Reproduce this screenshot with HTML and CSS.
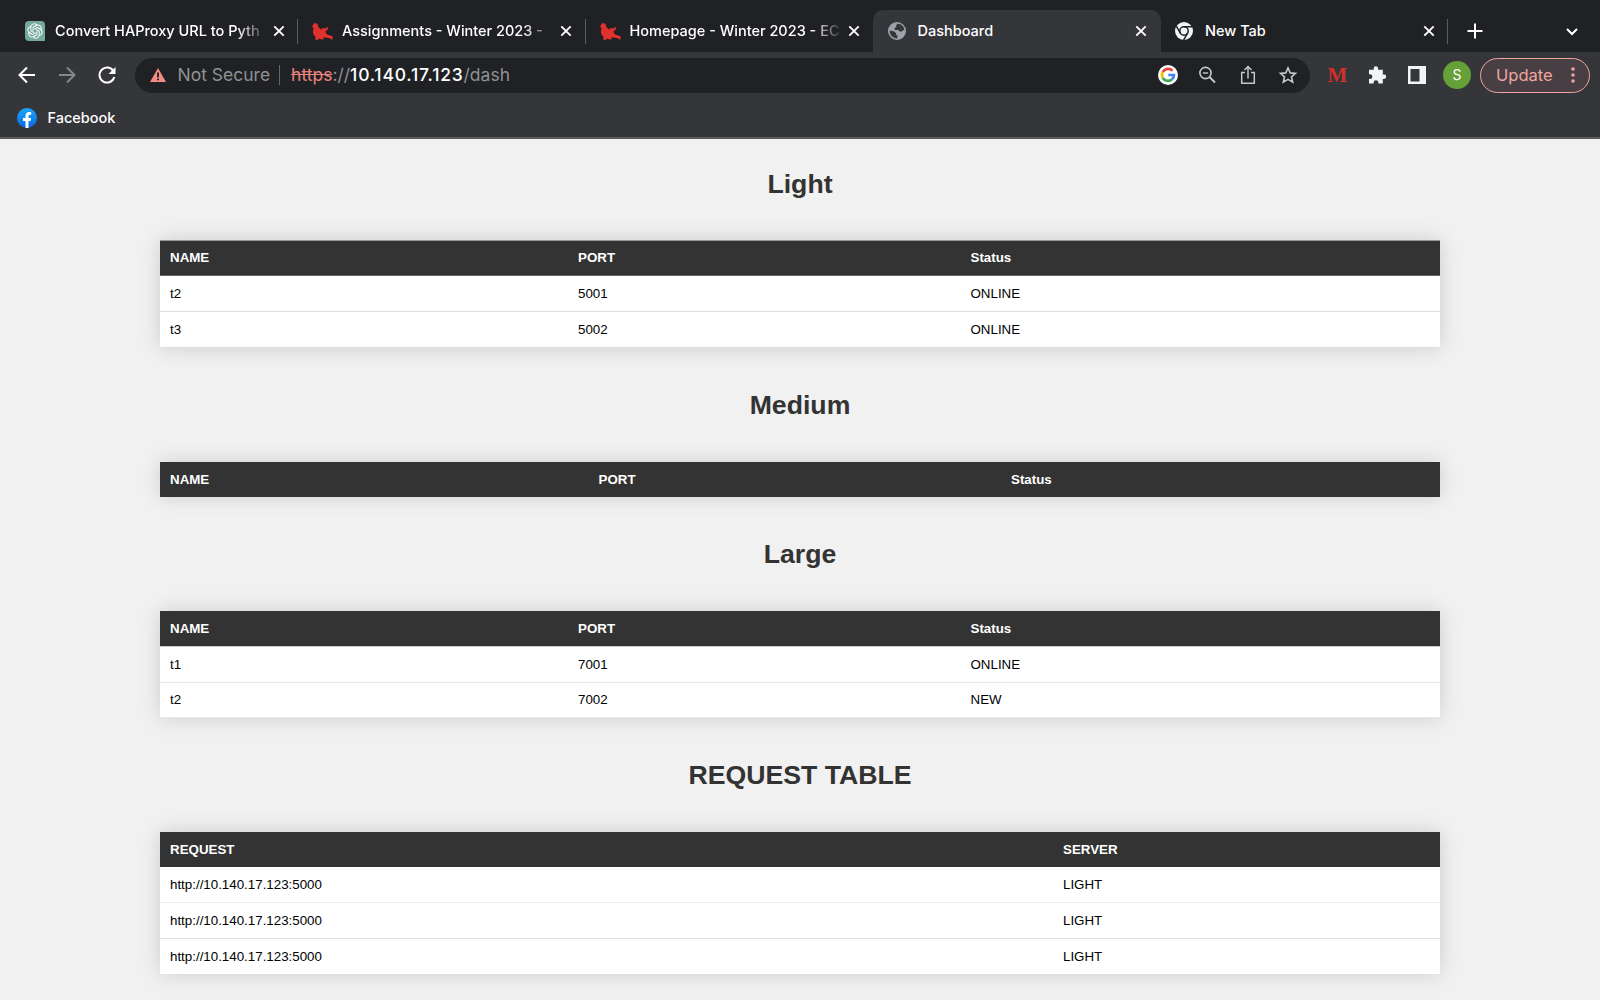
FILE: index.html
```html
<!DOCTYPE html>
<html lang="en">
<head>
<meta charset="utf-8">
<title>Dashboard</title>
<link rel="stylesheet" href="styles.css">
</head>
<body>
<svg class="defs" width="0" height="0">
  <symbol id="x" viewBox="0 0 12 12"><path d="M1.300 1.300l9.400 9.400M10.700 1.300l-9.400 9.400" stroke="#fff" stroke-width="1.900" fill="none"/></symbol>
  <symbol id="bird" viewBox="0 0 21 18"><path d="M.3 3.500L1 1.800C1.800-.3 5.600-.2 6 2.300L6.400 4.200 9 6.500 11 4.800 12.300 5.800 16.200 3.800 15.600 6.800 13.300 8.500 14.500 11 17 12.300 20.600 13.300 20.300 17.300 18.500 15.500 15 14.800 11.500 14.200 11.800 16.500 8.500 16.300 7.200 15.500 5.500 17 3.200 16.500 3.500 14 1.500 11.500 .8 8.500 1.500 5.500z" fill="#e0312d"/></symbol>
</svg>
<header class="browser">
  <div class="tabs">
    <div class="tab divided">
      <svg class="fav" width="20" height="20" viewBox="0 0 20 20"><path d="M4 0h12a4 4 0 0 1 4 4v16H4a4 4 0 0 1-4-4V4a4 4 0 0 1 4-4z" fill="#75a99b"/><path transform="translate(2.300 2.300) scale(.64)" fill="#fff" d="M22.2819 9.8211a5.9847 5.9847 0 0 0-.5157-4.9108 6.0462 6.0462 0 0 0-6.5098-2.9A6.0651 6.0651 0 0 0 4.9807 4.1818a5.9847 5.9847 0 0 0-3.9977 2.9 6.0462 6.0462 0 0 0 .7427 7.0966 5.98 5.98 0 0 0 .511 4.9107 6.051 6.051 0 0 0 6.5146 2.9001A5.9847 5.9847 0 0 0 13.2599 24a6.0557 6.0557 0 0 0 5.7718-4.2058 5.9894 5.9894 0 0 0 3.9977-2.9001 6.0557 6.0557 0 0 0-.7475-7.0729zm-9.022 12.6081a4.4755 4.4755 0 0 1-2.8764-1.0408l.1419-.0804 4.7783-2.7582a.7948.7948 0 0 0 .3927-.6813v-6.7369l2.02 1.1686a.071.071 0 0 1 .038.052v5.5826a4.504 4.504 0 0 1-4.4945 4.4944zm-9.6607-4.1254a4.4708 4.4708 0 0 1-.5346-3.0137l.142.0852 4.783 2.7582a.7712.7712 0 0 0 .7806 0l5.8428-3.3685v2.3324a.0804.0804 0 0 1-.0332.0615L9.74 19.9502a4.4992 4.4992 0 0 1-6.1408-1.6464zM2.3408 7.8956a4.485 4.485 0 0 1 2.3655-1.9728V11.6a.7664.7664 0 0 0 .3879.6765l5.8144 3.3543-2.0201 1.1685a.0757.0757 0 0 1-.071 0l-4.8303-2.7865A4.504 4.504 0 0 1 2.3408 7.872zm16.5963 3.8558L13.1038 8.364 15.1192 7.2a.0757.0757 0 0 1 .071 0l4.8303 2.7913a4.4944 4.4944 0 0 1-.6765 8.1042v-5.6772a.79.79 0 0 0-.407-.667zm2.0107-3.0231l-.142-.0852-4.7735-2.7818a.7759.7759 0 0 0-.7854 0L9.409 9.2297V6.8974a.0662.0662 0 0 1 .0284-.0615l4.8303-2.7866a4.4992 4.4992 0 0 1 6.6802 4.66zM8.3065 12.863l-2.02-1.1638a.0804.0804 0 0 1-.038-.0567V6.0742a4.4992 4.4992 0 0 1 7.3757-3.4537l-.142.0805L8.704 5.459a.7948.7948 0 0 0-.3927.6813zm1.0976-2.3654l2.602-1.4998 2.6069 1.4998v2.9994l-2.5974 1.4997-2.6067-1.4997Z"/></svg>
      <span class="title fade">Convert HAProxy URL to Pyth</span><svg class="close" width="12" height="12"><use href="#x"/></svg>
    </div>
    <div class="tab divided"><svg class="fav bird" width="21" height="18"><use href="#bird"/></svg><span class="title fade">Assignments - Winter 2023 -</span><svg class="close" width="12" height="12"><use href="#x"/></svg></div>
    <div class="tab"><svg class="fav bird" width="21" height="18"><use href="#bird"/></svg><span class="title fade">Homepage - Winter 2023 - EC</span><svg class="close" width="12" height="12"><use href="#x"/></svg></div>
    <div class="tab active">
      <svg class="fav" width="18" height="18" viewBox="0 0 18 18"><circle cx="9" cy="9" r="9" fill="#9da2a8"/><path d="M9.500 1.700L8 3.500l.4 1.600-1.800 1v1.800h3.600l1.500 1.500h2.200l1.300-1.500 1 .6C16.500 4.500 13.500 1.500 9.500 1.700zM1.800 8.500l4.600 1.100 1.700 1.700v1.500l1.400.8-.2 2.800C4.500 16 1.500 13 1.800 8.500z" fill="#35363a"/></svg>
      <span class="title wide">Dashboard</span><svg class="close" width="12" height="12"><use href="#x"/></svg>
    </div>
    <div class="tab divided">
      <svg class="fav" width="18" height="18" viewBox="0 0 18 18"><circle cx="9" cy="9" r="9" fill="#f1f3f4"/><circle cx="9" cy="9" r="4.200" fill="none" stroke="#202124" stroke-width="1.500"/><path d="M9 4.800h8M5.400 11.100L1.300 4.200M12.600 11.100l-4 7" stroke="#202124" stroke-width="1.500"/></svg>
      <span class="title wide">New Tab</span><svg class="close" width="12" height="12"><use href="#x"/></svg>
    </div>
    <svg class="plus" width="16" height="16" viewBox="0 0 16 16"><path d="M8 .5v15M.5 8h15" stroke="#fff" stroke-width="2"/></svg>
    <svg class="chev" width="12" height="8" viewBox="0 0 12 8"><path d="M1 1l5 5 5-5" fill="none" stroke="#fff" stroke-width="2"/></svg>
  </div>
  <div class="toolbar">
    <svg class="nav" width="18" height="18" viewBox="0 0 18 18"><path d="M17 9H2M9 1.500L1.500 9 9 16.500" fill="none" stroke="#fff" stroke-width="2"/></svg>
    <svg class="nav" width="18" height="18" viewBox="0 0 18 18"><path d="M1 9h15M9 1.500L16.500 9 9 16.500" fill="none" stroke="#85878a" stroke-width="2"/></svg>
    <svg class="nav" width="18" height="18" viewBox="0 0 18 18"><path d="M15.500 5.200A7.500 7.500 0 1 0 16.300 11" fill="none" stroke="#fff" stroke-width="2"/><path d="M17.500 1v7h-7z" fill="#fff"/></svg>
    <div class="omnibox">
      <svg class="warn" width="16" height="14" viewBox="0 0 16 14"><path d="M8 0l8 14H0z" fill="#f28b82"/><path d="M8 4.500v4.800M8 10.400v1.800" stroke="#202124" stroke-width="1.900"/></svg>
      <span class="insecure">Not Secure</span><i class="sep"></i>
      <span class="url"><s>https</s>://<b>10.140.17.123</b>/dash</span>
      <svg width="20" height="20" viewBox="0 0 20 20"><circle cx="10" cy="10" r="10" fill="#fff"/><g fill="none" stroke-width="2.700"><path d="M14.500 5.700A6.100 6.100 0 0 0 4.800 7" stroke="#ea4335"/><path d="M4.800 7a6.100 6.100 0 0 0 0 6" stroke="#fbbc05"/><path d="M4.800 13a6.100 6.100 0 0 0 9 1.500" stroke="#34a853"/><path d="M13.800 14.500A6 6 0 0 0 16 10h-5.700" stroke="#4285f4"/></g></svg>
      <svg width="20" height="18" viewBox="0 0 18 18" fill="none" stroke="#c4c7c9"><circle cx="6.500" cy="7" r="5.600" stroke-width="1.600"/><path d="M10.500 11l5.500 5.500" stroke-width="2"/><path d="M3.800 7h5.400" stroke-width="1.400"/></svg>
      <svg width="20" height="20" viewBox="0 0 16 20" fill="none" stroke="#c4c7c9" stroke-width="1.500"><path d="M5 7.500H1.700v10.700h12.600V7.500H11M8 13.500V2M4.500 5L8 1.500 11.500 5"/></svg>
      <svg width="20" height="18" viewBox="0 0 18 18"><path d="M9 1.900l2.200 5 5.300.5-4 3.500 1.200 5.300L9 13.400l-4.700 2.800 1.200-5.300-4-3.500 5.300-.5z" fill="none" stroke="#c4c7c9" stroke-width="1.600"/></svg>
    </div>
    <span class="mext">M</span>
    <svg class="puzzle" width="18" height="18" viewBox="0 0 18 18"><path d="M1 3.800h4.700V2.500a2.200 2.200 0 0 1 4.400 0v1.300h4.700v4.700H16a2.200 2.200 0 0 1 0 4.400h-1.200v4.700h-4.400v-1a2.400 2.400 0 0 0-4.800 0v1H1v-4.500h1a2.400 2.400 0 0 0 0-4.800H1z" fill="#f1f3f4"/></svg>
    <svg class="panel" width="18" height="18" viewBox="0 0 18 18"><path d="M0 0h18v18H0zM2.500 3v12.500h9V3z" fill="#f1f3f4" fill-rule="evenodd"/></svg>
    <span class="avatar">S</span>
    <div class="update">Update<svg width="4" height="16" viewBox="0 0 4 16" fill="#f0a59f"><circle cx="2" cy="2" r="1.800"/><circle cx="2" cy="8" r="1.800"/><circle cx="2" cy="14" r="1.800"/></svg></div>
  </div>
  <div class="bookmarks">
    <svg width="20" height="20" viewBox="0 0 20 20"><defs><linearGradient id="fb" x2="0" y2="1"><stop stop-color="#1aa9fb"/><stop offset="1" stop-color="#0866e0"/></linearGradient></defs><circle cx="10" cy="10" r="10" fill="url(#fb)"/><path d="M8.500 20v-7H6v-3h2.500V8c0-2.700 1.500-4 3.800-4l1.900.2v2.500h-1.200c-1.200 0-1.500.7-1.500 1.500V10h2.600l-.5 3h-2.100v7z" fill="#fff"/></svg>
    <span>Facebook</span>
  </div>
</header>
<main>
  <h2>Light</h2>
  <table class="light">
    <colgroup><col class="c-name"><col class="c-port"><col></colgroup>
    <thead><tr><th>NAME</th><th>PORT</th><th>Status</th></tr></thead>
    <tbody><tr><td>t2</td><td>5001</td><td>ONLINE</td></tr><tr><td>t3</td><td>5002</td><td>ONLINE</td></tr></tbody>
  </table>
  <h2>Medium</h2>
  <table>
    <colgroup><col class="e-name"><col class="e-port"><col></colgroup>
    <thead><tr><th>NAME</th><th>PORT</th><th>Status</th></tr></thead>
  </table>
  <h2>Large</h2>
  <table class="large">
    <colgroup><col class="c-name"><col class="c-port"><col></colgroup>
    <thead><tr><th>NAME</th><th>PORT</th><th>Status</th></tr></thead>
    <tbody><tr><td>t1</td><td>7001</td><td>ONLINE</td></tr><tr><td>t2</td><td>7002</td><td>NEW</td></tr></tbody>
  </table>
  <h2>REQUEST TABLE</h2>
  <table class="requests">
    <colgroup><col class="r-req"><col></colgroup>
    <thead><tr><th>REQUEST</th><th>SERVER</th></tr></thead>
    <tbody><tr><td>http://10.140.17.123:5000</td><td>LIGHT</td></tr><tr><td>http://10.140.17.123:5000</td><td>LIGHT</td></tr><tr><td>http://10.140.17.123:5000</td><td>LIGHT</td></tr></tbody>
  </table>
</main>
</body>
</html>
```

FILE: styles.css
```css
* { box-sizing: border-box; }
body { margin: 0; height: 1000px; overflow: hidden; background: #f1f1f1; font-family: "Liberation Sans", Arial, sans-serif; }
.defs { position: absolute; }
svg { flex: none; display: block; }

.browser { height: 139px; background: #35363a; border-bottom: 2px solid #5b5c5f; font-family: Inter, sans-serif; color: #fff; }
.tabs { height: 52px; background: #202124; display: flex; padding: 10px 22px 0 10.500px; }
.tab { height: 42px; display: flex; align-items: center; padding: 0 13.500px 0 14.500px; flex: none; width: 287.500px; font-size: 14.500px; font-weight: 500; }
.tab .title { flex: 1; min-width: 0; margin-left: 10px; white-space: nowrap; line-height: 24px; }
.tab .wide { margin-left: 12px; }
.tab .bird + .title { margin-left: 9px; }
.fade { -webkit-mask-image: linear-gradient(90deg, #000 86%, transparent 101%); mask-image: linear-gradient(90deg, #000 86%, transparent 101%); }
.tab .close { margin-left: 7px; }
.divided { background: linear-gradient(#5c5d60, #5c5d60) right center / 1px 25px no-repeat; }
.bird { margin-top: 2px; margin-left: -.5px; }
.active { background: #35363a; border-radius: 10px 10px 0 0; }
.plus { margin: 13px 0 0 19px; }
.chev { margin: 18px 0 0 auto; }

.toolbar { height: 46px; display: flex; align-items: center; padding: 0 10px 0 18.200px; }
.nav { margin-right: 22px; }
.omnibox { width: 1175px; height: 35px; margin-left: -3.200px; border-radius: 18px; background: #202124; display: flex; align-items: center; padding: 0 12.500px 0 15px; font-size: 17.500px; line-height: 22px; color: #8f9194; gap: 20px; }
.insecure { margin-left: -8.500px; }
.sep { width: 1px; height: 20px; background: #66676a; margin-left: -11.500px; }
.url { flex: 1; margin-left: -8.500px; }
.url b { font-weight: 450; letter-spacing: .8px; color: #fff; }
.url s { color: #e9847c; }
.mext { margin-left: 17.500px; width: 20px; font: bold 21px "Liberation Serif", serif; color: #d32f2b; }
.puzzle { margin-left: 20.500px; }
.panel { margin-left: 22px; }
.avatar { margin-left: 17px; width: 28px; height: 28px; border-radius: 50%; background: #65a038; text-align: center; font-size: 14px; line-height: 28px; }
.update { margin-left: auto; width: 110px; height: 35px; border: 1.500px solid #f0a59f; border-radius: 18px; background: #473f43; color: #f0a59f; font-size: 16.500px; display: flex; align-items: center; justify-content: space-between; padding: 0 14.500px 0 15px; }
.bookmarks { height: 39px; display: flex; align-items: center; gap: 10.500px; padding-left: 17px; font-size: 14.500px; font-weight: 500; }

main { width: 1280px; margin: 0 auto; }
h2 { margin: 0; height: 114px; padding-top: 40px; line-height: 34px; font-size: 26.670px; text-align: center; color: #333; }
h2:first-child { height: 101px; padding-top: 28px; }
table { width: 100%; table-layout: fixed; border-spacing: 0; background: #fff; font-size: 13.330px; box-shadow: 0 0 20px rgba(0,0,0,.15); }
th, td { padding: 0 10px; text-align: left; line-height: 16px; }
th { height: 35px; background: #333; color: #fff; }
td { height: 36px; border-bottom: 1px solid #ddd; }
.light th { height: 36px; border-top: 1px solid #999; border-bottom: 1px solid #666; }
.large th { height: 36px; border-bottom: 1px solid #ccc; }
.large td { border-bottom-color: #e8e8e8; }
.large tr:last-child td { height: 35px; }
.requests tbody tr:first-child td { border-bottom-color: #eee; }
.requests tbody tr:last-child td { height: 35px; border-bottom: 0; }
.c-name { width: 408px; }
.c-port { width: 392.500px; }
.e-name { width: 428.500px; }
.e-port { width: 412.500px; }
.r-req { width: 893px; }
```
